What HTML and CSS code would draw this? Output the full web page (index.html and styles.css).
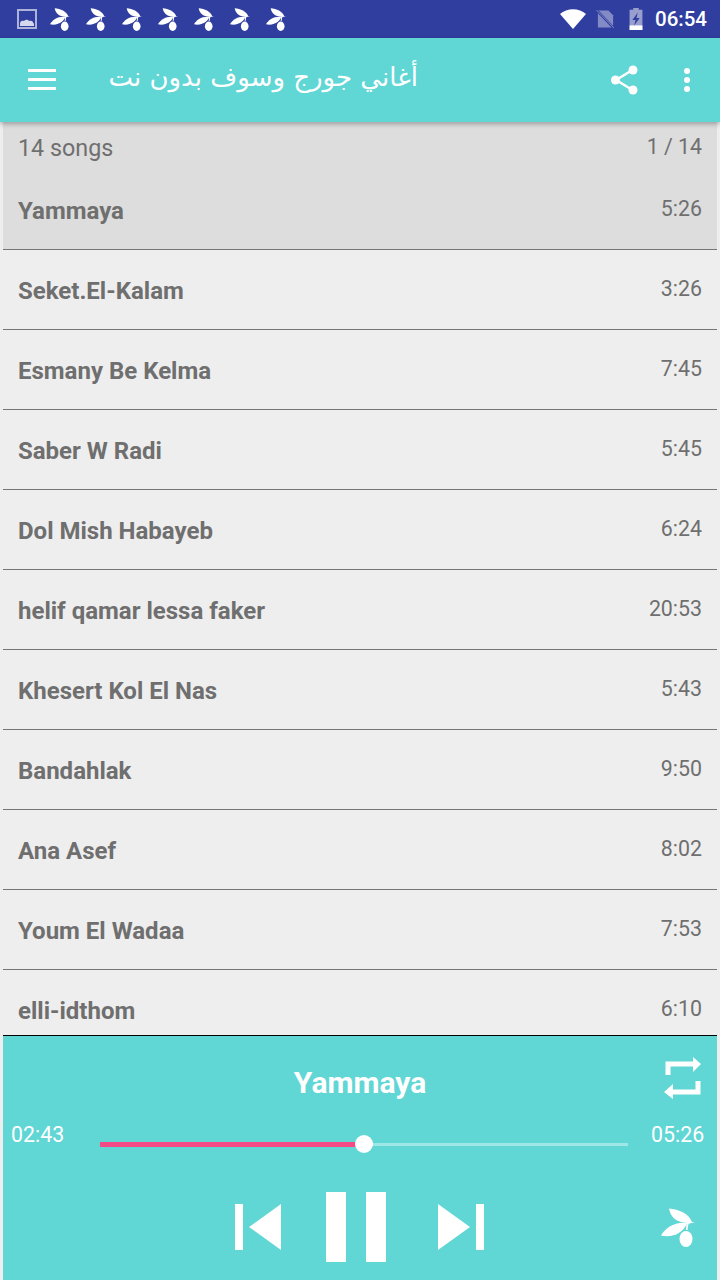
FILE: index.html
```html
<!DOCTYPE html>
<html lang="en">
<head>
<meta charset="UTF-8">
<meta name="viewport" content="width=device-width, initial-scale=1.0">
<title>Songs</title>
<link rel="stylesheet" href="styles.css">
</head>
<body>
  <svg class="defs" width="0" height="0">
    <symbol id="olive" viewBox="0 0 34 39">
      <path d="M8 0.500C18 1 28 6 31 14C20 16.500 10 12 8 0.500Z"/>
      <path d="M0 27.500C4 20 14 13.500 26 15C23 24.500 11 30.500 0 27.500Z"/>
      <path d="M26 13.500L34 14.500L27.500 15.800L26.500 22L25 22L25.500 15.500Z"/>
      <ellipse cx="25" cy="31" rx="6.500" ry="8"/>
    </symbol>
  </svg>

  <div class="status-bar">
    <div class="status-left">
      <svg class="status-pic" viewBox="0 0 20 20"><path d="M1 1H19V19H1Z" fill="none" stroke="#fff" stroke-opacity=".6" stroke-width="2"/><path d="M3 15C3 12 5 11 7 12C9 10 11 11 12 12C14 11 16 12 17 15V17H3Z" fill="#fff" fill-opacity=".8"/></svg>
      <svg class="olive-small"><use href="#olive"/></svg>
      <svg class="olive-small"><use href="#olive"/></svg>
      <svg class="olive-small"><use href="#olive"/></svg>
      <svg class="olive-small"><use href="#olive"/></svg>
      <svg class="olive-small"><use href="#olive"/></svg>
      <svg class="olive-small"><use href="#olive"/></svg>
      <svg class="olive-small"><use href="#olive"/></svg>
    </div>
    <div class="status-right">
      <svg class="status-wifi" viewBox="0 0 26 20"><path d="M0 5C7 -1.500 19 -1.500 26 5L13 20Z" fill="#fff"/></svg>
      <svg class="status-sim" viewBox="0 0 20 20"><path d="M2 1H13L18 6V19H2Z" fill="#fff" fill-opacity=".4"/><path d="M0 0L19 20" stroke="#303f9f" stroke-width="2.500"/><path d="M0.500 0.500L19 19.500" stroke="#fff" stroke-opacity=".4" stroke-width="1"/></svg>
      <svg class="status-battery" viewBox="0 0 14 24"><path d="M4 0H10V2H14V24H0V2H4Z" fill="#fff" fill-opacity=".5"/><path d="M0 19H14V24H0Z" fill="#fff"/><path d="M9 5L3 13H6.500L5 19L11 11H7.500Z" fill="#303f9f"/></svg>
      <span class="clock">06:54</span>
    </div>
  </div>

  <header class="app-bar">
    <div class="menu-icon"><span></span><span></span><span></span></div>
    <h1 class="app-title" dir="rtl">أغاني جورج وسوف بدون نت</h1>
    <svg class="share-icon" viewBox="0 0 27 30">
      <path d="M21.500 5L5 15L21.500 25" fill="none" stroke="#fff" stroke-width="2.500"/>
      <circle cx="22" cy="5" r="4.500"  fill="#fff"/>
      <circle cx="4.500" cy="15" r="4.500" fill="#fff"/>
      <circle cx="22" cy="25" r="4.500" fill="#fff"/>
    </svg>
    <div class="more-icon"><span></span><span></span><span></span></div>
  </header>

  <main class="song-list">
    <div class="list-head">
      <span class="song-count">14 songs</span>
      <span class="song-pos">1 / 14</span>
    </div>
    <div class="song-row current"><span class="song-name">Yammaya</span><span class="song-time">5:26</span></div>
    <div class="song-row"><span class="song-name">Seket.El-Kalam</span><span class="song-time">3:26</span></div>
    <div class="song-row"><span class="song-name">Esmany Be Kelma</span><span class="song-time">7:45</span></div>
    <div class="song-row"><span class="song-name">Saber W Radi</span><span class="song-time">5:45</span></div>
    <div class="song-row"><span class="song-name">Dol Mish Habayeb</span><span class="song-time">6:24</span></div>
    <div class="song-row"><span class="song-name">helif qamar lessa faker</span><span class="song-time">20:53</span></div>
    <div class="song-row"><span class="song-name">Khesert Kol El Nas</span><span class="song-time">5:43</span></div>
    <div class="song-row"><span class="song-name">Bandahlak</span><span class="song-time">9:50</span></div>
    <div class="song-row"><span class="song-name">Ana Asef</span><span class="song-time">8:02</span></div>
    <div class="song-row"><span class="song-name">Youm El Wadaa</span><span class="song-time">7:53</span></div>
    <div class="song-row"><span class="song-name">elli-idthom</span><span class="song-time">6:10</span></div>
  </main>

  <footer class="player">
    <div class="player-top">
      <div class="player-title">Yammaya</div>
      <svg class="repeat-icon" viewBox="0 0 40 42">
        <path d="M5 18V7H32" fill="none" stroke="#fff" stroke-width="5"/>
        <path d="M30 0L38 7L30 15Z" fill="#fff"/>
        <path d="M35 24V35H8" fill="none" stroke="#fff" stroke-width="5"/>
        <path d="M10 27L1 35L10 42Z" fill="#fff"/>
      </svg>
    </div>
    <div class="seek-row">
      <span class="seek-time">02:43</span>
      <div class="seek-bar">
        <div class="seek-fill"></div>
        <div class="seek-thumb"></div>
      </div>
      <span class="seek-time">05:26</span>
    </div>
    <div class="controls">
      <svg class="skip-icon" viewBox="0 0 46 46"><path d="M0 0H8V46H0ZM46 0V46L14 23Z" fill="#fff"/></svg>
      <div class="pause-icon"><span></span><span></span></div>
      <svg class="skip-icon next" viewBox="0 0 46 46"><path d="M46 0H38V46H46ZM0 0V46L32 23Z" fill="#fff"/></svg>
      <svg class="olive-big"><use href="#olive"/></svg>
    </div>
  </footer>
</body>
</html>
```

FILE: styles.css
```css
* {
  box-sizing: border-box;
}

body {
  margin: 0;
  width: 720px;
  height: 1280px;
  overflow: hidden;
  display: flex;
  flex-direction: column;
  font-family: Roboto, sans-serif;
  background-color: #eeeeee;
}

.defs {
  display: block;
  height: 0;
}

/* status bar */
.status-bar {
  height: 38px;
  flex: none;
  display: flex;
  justify-content: space-between;
  align-items: center;
  background-color: #303f9f;
  padding: 0 13px 0 17px;
}

.status-left,
.status-right {
  display: flex;
  align-items: center;
}

.status-pic {
  width: 20px;
  height: 20px;
  margin-right: 13px;
}

.olive-small {
  width: 20px;
  height: 23px;
  margin-right: 16px;
  fill: #ffffff;
}

.status-wifi {
  width: 26px;
  height: 20px;
  margin-right: 10px;
}

.status-sim {
  width: 19px;
  height: 20px;
  margin-right: 14px;
}

.status-battery {
  width: 14px;
  height: 22px;
  margin-right: 12px;
}

.clock {
  color: #ffffff;
  font-size: 20.500px;
  font-weight: 500;
}

/* app bar */
.app-bar {
  height: 84px;
  flex: none;
  display: flex;
  align-items: center;
  position: relative;
  z-index: 1;
  background-color: #60d6d5;
  box-shadow: 0 2px 5px rgba(0, 0, 0, 0.3);
  padding: 0 28px 0 28px;
}

.menu-icon {
  width: 28px;
  display: flex;
  flex-direction: column;
  gap: 6px;
  margin-top: -1px;
}

.menu-icon span {
  height: 3px;
  background-color: #ffffff;
}

.app-title {
  margin: -6px 0 0 52px;
  width: 310px;
  color: #ffffff;
  font-family: "DejaVu Sans", sans-serif;
  font-size: 26px;
  font-weight: normal;
  white-space: nowrap;
}

.share-icon {
  width: 27px;
  height: 30px;
  margin-left: auto;
  margin-right: 46px;
}

.more-icon {
  width: 8px;
  display: flex;
  flex-direction: column;
  gap: 3px;
}

.more-icon span {
  height: 6px;
  width: 6px;
  border-radius: 50%;
  background-color: #ffffff;
}

/* list */
.song-list {
  flex: 1;
  min-height: 0;
  overflow: hidden;
  margin: 0 3px;
}

.list-head {
  height: 48px;
  display: flex;
  justify-content: space-between;
  padding: 12px 15px 0;
  background-color: #dddddd;
  color: #6f6f6f;
}

.song-count {
  font-size: 23.300px;
}

.song-pos {
  font-size: 21.330px;
}

.song-row {
  height: 80px;
  flex: none;
  display: flex;
  justify-content: space-between;
  align-items: center;
  padding: 0 15px;
  border-bottom: 1px solid #757575;
  color: #6f6f6f;
}

.song-row.current {
  background-color: #dddddd;
}

.song-name {
  font-size: 24px;
  font-weight: 700;
  margin-top: 2px;
}

.song-time {
  font-size: 21.330px;
  margin-top: -2px;
}

/* player */
.player {
  height: 245px;
  flex: none;
  margin: 0 3px;
  border-top: 1px solid #000000;
  background-color: #60d6d5;
}

.player-top {
  height: 84px;
  display: flex;
  justify-content: center;
  align-items: center;
  padding-top: 8px;
  position: relative;
  color: #ffffff;
}

.player-title {
  font-size: 30px;
  font-weight: 700;
}

.repeat-icon {
  position: absolute;
  right: 14px;
  top: 21px;
  width: 40px;
  height: 42px;
}

.seek-row {
  height: 40px;
  display: flex;
  align-items: center;
  padding: 0 10px 0 8px;
  color: #ffffff;
}

.seek-time {
  width: 54px;
  flex: none;
  font-size: 21.330px;
  margin-top: -11px;
}

.seek-bar {
  width: 528px;
  height: 3px;
  flex: none;
  position: relative;
  margin-left: 35px;
  margin-right: 23px;
  margin-top: 9px;
  background-color: rgba(255, 255, 255, 0.4);
}

.seek-fill {
  width: 50%;
  height: 5px;
  margin-top: -1px;
  background-color: #f44a85;
}

.seek-thumb {
  position: absolute;
  left: 255px;
  top: -8px;
  width: 18px;
  height: 18px;
  border-radius: 50%;
  background-color: #ffffff;
}

.controls {
  height: 120px;
  display: flex;
  justify-content: center;
  align-items: center;
  gap: 45px;
  position: relative;
  padding: 14px 1px 0 0;
}

.skip-icon {
  width: 46px;
  height: 46px;
}

.skip-icon.next {
  margin-left: 7px;
}

.pause-icon {
  display: flex;
  gap: 20px;
}

.pause-icon span {
  width: 20px;
  height: 70px;
  background-color: #ffffff;
}

.olive-big {
  position: absolute;
  right: 22px;
  top: 48px;
  width: 34px;
  height: 39px;
  fill: #ffffff;
}
```
